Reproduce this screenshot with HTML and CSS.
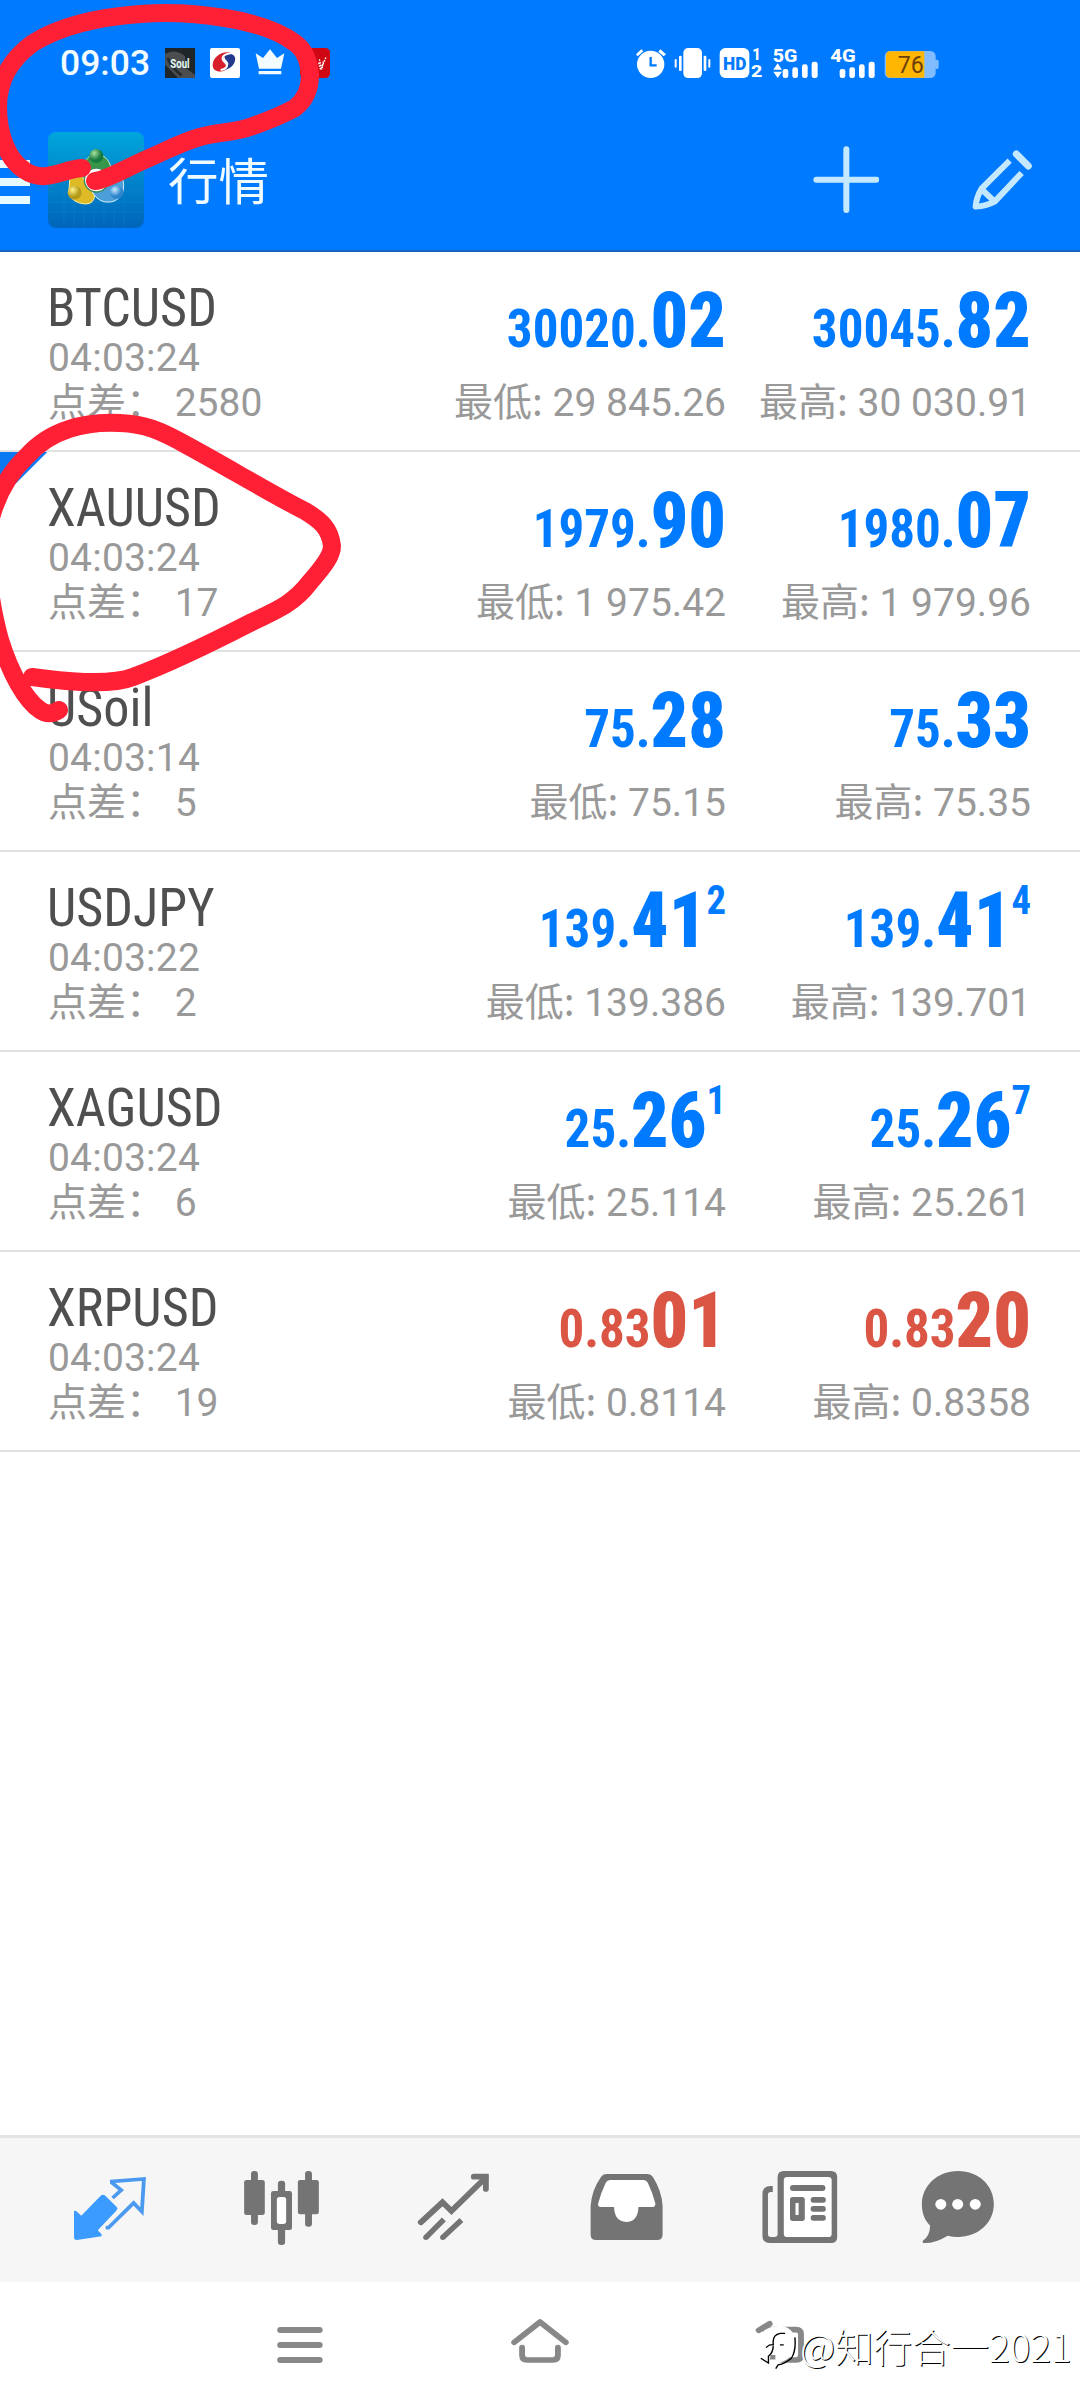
FILE: index.html
```html
<!DOCTYPE html>
<html lang="zh-CN">
<head>
<meta charset="utf-8">
<title>行情</title>
<link rel="stylesheet" href="styles.css">
</head>
<body>
<div class="screen">
  <header class="header">
    <div class="statusbar">
      <span class="clock">09:03</span>
      <div class="notifications">
        <svg class="notif" viewBox="0 0 90 90"><rect width="90" height="90" fill="#1f2629"/><path d="M0 18Q30 0 60 24L62 60 90 80V90H40Q10 60 0 50Z" fill="#4b4d4e"/><path d="M8 30Q20 60 50 82" stroke="#252a2c" stroke-width="8" fill="none"/><text x="16" y="59" font-size="38" font-weight="700" textLength="58" lengthAdjust="spacingAndGlyphs" fill="#e4fbf8">Soul</text></svg>
        <svg class="notif" viewBox="0 0 90 90"><rect width="90" height="90" rx="6" fill="#fff"/><path d="M62 14C34 8 8 28 8 52C8 70 30 76 46 66C56 58 52 48 42 42C34 36 40 24 62 14Z" fill="#d8202c"/><path d="M48 17C70 14 80 26 74 42C68 58 52 66 40 66C54 58 60 48 50 38C42 30 42 22 48 17Z" fill="#24388c"/><path d="M62 16C32 20 34 34 46 44C56 54 50 62 32 66" stroke="#fff" stroke-width="6" fill="none"/></svg>
        <svg class="notif" viewBox="0 0 90 90"><path d="M2 16L24 30 45 4 66 30 88 16 78 62H12ZM11 69H79V79H11Z" fill="#f2fcff"/></svg>
        <svg class="notif" viewBox="0 0 90 90"><rect width="90" height="90" rx="14" fill="#cf0712"/><path d="M58 34L64 60 78 28M56 44L62 66M70 40L66 64" stroke="#fff" stroke-width="4" stroke-dasharray="5 3" fill="none"/></svg>
      </div>
      <svg class="indicators" viewBox="100 75 930 110">
        <g fill="#fff">
          <circle cx="153" cy="133" r="41"/><path d="M109 103L125 88 131 94 114 109ZM182 88L199 103 192 109 176 95Z"/>
          <path d="M153 111V136H171" stroke="#007aff" stroke-width="7" fill="none"/>
          <rect x="251" y="84" width="56" height="90" rx="14"/><rect x="238" y="107" width="8" height="46" rx="3"/><rect x="225" y="117" width="6" height="26" rx="3"/><rect x="312" y="107" width="8" height="46" rx="3"/><rect x="326" y="117" width="6" height="26" rx="3"/>
          <rect x="360" y="84" width="89" height="90" rx="17"/>
          <text x="370" y="149" font-size="57" font-weight="900" textLength="70" lengthAdjust="spacingAndGlyphs" fill="#007aff">HD</text>
          <text x="458" y="121" font-size="49" font-weight="800" textLength="26" lengthAdjust="spacingAndGlyphs">1</text>
          <text x="454" y="172" font-size="49" font-weight="800" textLength="34" lengthAdjust="spacingAndGlyphs">2</text>
          <text x="519" y="125" font-size="57" font-weight="800" textLength="74" lengthAdjust="spacingAndGlyphs">5G</text>
          <text x="692" y="125" font-size="57" font-weight="800" textLength="76" lengthAdjust="spacingAndGlyphs">4G</text>
          <path d="M534 130L547 149H521ZM521 155H547L534 174Z"/>
          <rect x="549" y="147" width="17" height="27" rx="7"/><rect x="578" y="142" width="17" height="32" rx="7"/><rect x="607" y="133" width="17" height="41" rx="7"/><rect x="636" y="125" width="18" height="49" rx="7"/>
          <rect x="720" y="147" width="17" height="27" rx="7"/><rect x="749" y="142" width="17" height="32" rx="7"/><rect x="778" y="133" width="17" height="41" rx="7"/><rect x="807" y="125" width="18" height="49" rx="7"/>
        </g>
        <rect x="855" y="93" width="153" height="81" rx="16" fill="#80bcff"/><rect x="1006" y="119" width="11" height="28" rx="5" fill="#80bcff"/>
        <path d="M872 94H974V173H872Q859 173 859 160V107Q859 94 872 94Z" fill="#ffb600"/>
        <text x="894" y="158" font-size="69" textLength="78" lengthAdjust="spacingAndGlyphs" fill="#6b3f08">76</text>
      </svg>
    </div>
    <div class="toolbar">
      <div class="drawer"><i></i><i></i><i></i></div>
      <svg class="app-icon" viewBox="0 0 288 288">
        <defs>
          <linearGradient id="tile" x2="0" y2="1"><stop stop-color="#00a6dd"/><stop offset=".5" stop-color="#0084c9"/><stop offset="1" stop-color="#0065bb"/></linearGradient>
          <radialGradient id="gold" cx=".35" cy=".3"><stop stop-color="#fff08a"/><stop offset="1" stop-color="#b39a18"/></radialGradient>
          <radialGradient id="sky" cx=".35" cy=".3"><stop stop-color="#c9eaff"/><stop offset="1" stop-color="#2d86cc"/></radialGradient>
          <radialGradient id="leaf" cx=".35" cy=".3"><stop stop-color="#a8e29a"/><stop offset="1" stop-color="#16793f"/></radialGradient>
        </defs>
        <rect width="288" height="288" rx="24" fill="url(#tile)"/>
        <path d="M48 0V288M78 0V288M108 0V288M138 0V288M168 0V288M198 0V288M228 0V288M0 210H288M0 240H288M0 180H288" stroke="#26a0dc" stroke-width="2" opacity=".25"/>
        <path d="M106 118C108 76 130 66 146 68C174 68 188 90 191 120L178 138Q146 110 116 134Z" fill="#36974b" stroke="#d2ebc0" stroke-width="3"/>
        <path d="M66 134Q66 110 90 104Q106 150 140 190Q138 216 112 216Q76 214 62 186Z" fill="#dfba27" stroke="#fff3a2" stroke-width="3"/>
        <path d="M128 170Q160 184 188 150L222 136Q232 160 222 186Q206 214 172 210Q144 206 128 170Z" fill="#4b9ed8" stroke="#d6efff" stroke-width="3"/>
        <circle cx="145" cy="144" r="36" fill="#fff" stroke="#3b8a5a" stroke-width="4"/>
        <circle cx="145" cy="72" r="21" fill="url(#leaf)"/><circle cx="80" cy="182" r="21" fill="url(#gold)"/><circle cx="206" cy="181" r="20" fill="url(#sky)"/>
      </svg>
      <h1 class="title">行情</h1>
      <svg class="tool-icon add" viewBox="638 379 200 202"><path d="M738 389V571M648 480H828" stroke="#c4e9ff" stroke-width="18" stroke-linecap="round"/></svg>
      <svg class="tool-icon edit" viewBox="1117 388 181 181"><g fill="none" stroke="#c4e9ff" stroke-width="18" stroke-linejoin="round"><path d="M1230 420L1145 505Q1130 530 1128 558Q1160 556 1185 543L1266 457"/><path d="M1145 505L1185 543"/><path d="M1250 400L1286 436" stroke-width="21" stroke-linecap="round"/></g></svg>
    </div>
  </header>

  <main class="quotes">
    <section class="row">
      <div class="info"><h2>BTCUSD</h2><p class="time">04:03:24</p><p class="meta">点差： 2580</p></div>
      <div class="quote"><p class="price">30020.<b>02</b></p><p class="meta"><span>最低:</span> 29 845.26</p></div>
      <div class="quote"><p class="price">30045.<b>82</b></p><p class="meta"><span>最高:</span> 30 030.91</p></div>
    </section>
    <section class="row flagged">
      <div class="info"><h2>XAUUSD</h2><p class="time">04:03:24</p><p class="meta">点差： 17</p></div>
      <div class="quote"><p class="price">1979.<b>90</b></p><p class="meta"><span>最低:</span> 1 975.42</p></div>
      <div class="quote"><p class="price">1980.<b>07</b></p><p class="meta"><span>最高:</span> 1 979.96</p></div>
    </section>
    <section class="row">
      <div class="info"><h2>USoil</h2><p class="time">04:03:14</p><p class="meta">点差： 5</p></div>
      <div class="quote"><p class="price">75.<b>28</b></p><p class="meta"><span>最低:</span> 75.15</p></div>
      <div class="quote"><p class="price">75.<b>33</b></p><p class="meta"><span>最高:</span> 75.35</p></div>
    </section>
    <section class="row">
      <div class="info"><h2>USDJPY</h2><p class="time">04:03:22</p><p class="meta">点差： 2</p></div>
      <div class="quote"><p class="price">139.<b>41</b><sup>2</sup></p><p class="meta"><span>最低:</span> 139.386</p></div>
      <div class="quote"><p class="price">139.<b>41</b><sup>4</sup></p><p class="meta"><span>最高:</span> 139.701</p></div>
    </section>
    <section class="row">
      <div class="info"><h2>XAGUSD</h2><p class="time">04:03:24</p><p class="meta">点差： 6</p></div>
      <div class="quote"><p class="price">25.<b>26</b><sup>1</sup></p><p class="meta"><span>最低:</span> 25.114</p></div>
      <div class="quote"><p class="price">25.<b>26</b><sup>7</sup></p><p class="meta"><span>最高:</span> 25.261</p></div>
    </section>
    <section class="row down">
      <div class="info"><h2>XRPUSD</h2><p class="time">04:03:24</p><p class="meta">点差： 19</p></div>
      <div class="quote"><p class="price">0.83<b>01</b></p><p class="meta"><span>最低:</span> 0.8114</p></div>
      <div class="quote"><p class="price">0.83<b>20</b></p><p class="meta"><span>最高:</span> 0.8358</p></div>
    </section>
  </main>

  <nav class="tabs">
    <svg viewBox="61 54 502.4 432" preserveAspectRatio="none"><path d="M294 226Q300 222 306 227L339 261Q343 266 339 271L284 331 295 343V349L223 360Q215 360 215 352V272L221 273 236 287Z" fill="#3b9bff"/><path d="M327 234L352 210 325 188V184L418 177 412 275 388 249 315 323H307" fill="none" stroke="#4c9af0" stroke-width="11"/></svg>
    <svg viewBox="563.4 54 502.4 432" preserveAspectRatio="none"><g fill="#747474"><rect x="709" y="180" width="60" height="105" rx="7"/><rect x="729" y="153" width="20" height="162" rx="9"/><rect x="865" y="180" width="61" height="103" rx="7"/><rect x="886" y="153" width="20" height="167" rx="9"/><rect x="807" y="182" width="21" height="193" rx="9"/><rect x="787" y="213" width="61" height="117" rx="7"/></g><rect x="804" y="231" width="27" height="81" rx="8" fill="#fff"/></svg>
    <svg viewBox="1065.8 54 502.4 432" preserveAspectRatio="none"><g fill="none" stroke="#747474" stroke-width="17" stroke-linecap="round"><path d="M1222 307L1285 247 1311 273 1410 173"/><path d="M1376 170H1411V207"/></g><path d="M1237 352L1289 298M1286 352L1340 300" stroke="#747474" stroke-width="16"/><circle cx="1237" cy="352" r="8" fill="#747474"/><circle cx="1286" cy="352" r="8" fill="#747474"/></svg>
    <svg viewBox="0 54 502.4 432" preserveAspectRatio="none"><path d="M192 162H313Q322 162 328 171Q354 214 356 258V344Q356 360 340 360H163Q147 360 147 344V258Q150 211 177 171Q183 162 192 162Z" fill="#747474"/><path d="M203 180H301Q309 180 313 188Q326 215 335 250Q336 261 327 261H286Q284 306 250 306Q216 304 215 261H176Q167 261 169 250Q176 220 191 188Q195 180 203 180Z" fill="#fff"/></svg>
    <svg viewBox="502.4 54 502.4 432" preserveAspectRatio="none"><path d="M676 198H670Q646 198 646 222V348Q646 369 667 369H845Q863 369 863 351V171Q863 153 845 153H708Q690 153 690 171V342Q690 351 681 351H670Q662 351 662 342V225Q662 216 670 216H676Z" fill="#747474"/><rect x="708" y="171" width="139" height="180" rx="10" fill="#fff"/><g fill="#747474"><rect x="726" y="195" width="103" height="18" rx="9"/><rect x="726" y="231" width="43" height="72" rx="8"/><rect x="786" y="231" width="44" height="17" rx="8"/><rect x="786" y="258" width="44" height="17" rx="8"/><rect x="786" y="285" width="44" height="17" rx="8"/></g><rect x="742" y="249" width="9" height="36" fill="#fff"/></svg>
    <svg viewBox="1004.8 54 502.4 432" preserveAspectRatio="none"><path d="M1214 153C1275 153 1318 198 1318 252C1318 310 1270 351 1214 351Q1197 351 1184 347Q1150 369 1117 369Q1109 369 1112 362Q1132 348 1133 317C1115 298 1109 277 1109 252C1109 197 1155 153 1214 153Z" fill="#747474"/><g fill="#fff"><circle cx="1164" cy="253" r="16"/><circle cx="1213" cy="253" r="16"/><circle cx="1264" cy="253" r="16"/></g></svg>
  </nav>

  <nav class="system">
    <svg viewBox="522.7 486 697 378" preserveAspectRatio="none"><path d="M814 630H928M814 675H928M814 720H928" stroke="#888" stroke-width="18" stroke-linecap="round"/></svg>
    <svg viewBox="-348.5 486 697 378" preserveAspectRatio="none"><path d="M-75 667L0 606 75 667M-52 683V706Q-52 720 -38 720H38Q52 720 52 706V683" fill="none" stroke="#888" stroke-width="17" stroke-linecap="round" stroke-linejoin="round"/></svg>
    <svg viewBox="348.5 486 697 378" preserveAspectRatio="none"><path d="M635 631L667 611M654 629H744Q758 629 758 643V706Q758 720 744 720H676" fill="none" stroke="#888" stroke-width="17" stroke-linecap="round"/></svg>
    <div class="watermark">
      <svg viewBox="634 620 115 140" preserveAspectRatio="none"><path d="M640 655Q655 625 700 626Q744 630 742 690Q734 724 690 738L684 754Q684 740 672 738L662 738Q644 730 642 700Z" fill="#fff"/><path d="M657 690L668 682H678Q674 652 698 648H712M697 682H708M678 686Q676 708 664 716V736L642 722M740 660Q744 700 730 722Q712 738 692 742L685 753" fill="none" stroke="#000" stroke-width="4"/><path d="M670 712H684V726H668Z" fill="#888"/></svg>
      <span>@知行合一2021</span>
    </div>
  </nav>

  <svg class="marker" viewBox="0 0 1080 760">
    <path d="M95 181C106 180 126 168 147 159C170 149 182 142 200 137C218 132 230 133 247 128C265 122 280 116 295 108C305 100 310 88 310 75C309 62 305 50 295 43C278 30 250 22 225 18C195 13 165 12 140 14C100 17 60 26 33 43C12 58 -2 80 -2 107C-2 135 8 160 24 170C44 184 60 170 82 168"/>
    <path d="M32 677C60 681 110 686 133 677C170 663 215 641 250 623C280 609 295 602 310 582C325 565 332 555 332 546C330 528 320 520 305 511C277 497 225 466 190 447C160 430 145 424 120 423C85 421 50 430 27 456C10 472 -5 495 -12 530C-14 580 -8 610 0 640C10 672 25 700 40 710C48 716 54 713 59 710"/>
  </svg>
</div>
</body>
</html>
```
FILE: styles.css
```css
* { box-sizing: border-box; margin: 0; padding: 0; }
body { background: #fff; }
.screen {
  position: relative;
  display: flex;
  flex-direction: column;
  width: 1080px;
  height: 2408px;
  overflow: hidden;
  background: #fff;
  font-family: Roboto, "Noto Sans CJK SC", sans-serif;
}
.header {
  height: 252px;
  background: #007aff;
  border-bottom: 2px solid #1565c0;
}
.statusbar {
  display: flex;
  align-items: flex-start;
  height: 132px;
  padding: 45px 136.7px 0 60px;
}
.clock {
  width: 105px;
  font-size: 35.5px;
  font-weight: 500;
  line-height: 37px;
  color: #f2fcff;
}
.notifications { display: flex; gap: 15px; padding-top: 3px; }
.notif { width: 30px; height: 30px; }
.indicators { width: 310px; height: 36.7px; margin-left: auto; }
.toolbar { display: flex; align-items: center; height: 96px; padding-right: 47.5px; }
.drawer { display: flex; flex-direction: column; gap: 10px; width: 48px; padding-top: 4px; }
.drawer i { width: 30px; height: 8px; background: #e6f9ff; }
.app-icon { width: 96px; height: 96px; }
.title {
  margin-left: 24px;
  padding-top: 5px;
  font-size: 50.5px;
  font-weight: 400;
  line-height: 60px;
  color: #f0fbff;
}
.tool-icon.add { width: 66.7px; height: 67.3px; margin-left: auto; }
.tool-icon.edit { width: 60.3px; height: 60.3px; margin-left: 93px; }

.quotes { height: 1883px; }
.row {
  display: grid;
  grid-template-columns: 378px 300px 305px;
  height: 200px;
  padding-left: 48px;
  border-bottom: 2px solid #e1e1e1;
}
.flagged { background: linear-gradient(135deg, #0a79f2 33px, transparent 34px); }
.info { padding-top: 26px; white-space: nowrap; }
.info h2 {
  margin-left: -1px;
  font-family: "Roboto Condensed", Roboto, sans-serif;
  font-stretch: 75%;
  font-size: 54px;
  font-weight: 400;
  line-height: 60px;
  color: #4f4f4f;
  transform: scaleX(.966);
  transform-origin: left;
}
.time { font-size: 39px; line-height: 41px; letter-spacing: .2px; color: #999; }
.meta { font-size: 39px; line-height: 48px; color: #999; }
.meta span { font-family: "Noto Sans CJK SC", sans-serif; line-height: 0; }
.quote { padding-top: 29px; text-align: right; white-space: nowrap; }
.price {
  height: 80px;
  margin-bottom: 18px;
  font-family: "Roboto Condensed", Roboto, sans-serif;
  font-stretch: 75%;
  font-size: 54px;
  font-weight: 700;
  line-height: 0;
  color: #007aff;
  transform: scaleX(.945);
  transform-origin: right;
}
.price b { font-size: 78px; line-height: 80px; }
.price sup { font-size: 41px; line-height: 0; vertical-align: 33px; }
.down .price { color: #db5545; }

.tabs {
  display: flex;
  height: 147px;
  padding-left: 21px;
  background: #f6f6f6;
  border-top: 3px solid #e4e4e4;
}
.tabs svg { width: 173px; height: 144px; flex: none; }
.system { position: relative; display: flex; height: 126px; padding-left: 180px; }
.system > svg { width: 240px; height: 126px; }
.watermark {
  position: absolute;
  left: 758px;
  top: 37px;
  display: flex;
  align-items: center;
  font-family: "Noto Sans CJK SC", sans-serif;
  font-size: 38.5px;
  font-weight: 300;
  line-height: 50px;
  color: #fff;
  text-shadow: 1px 1px 0 #000;
  white-space: nowrap;
}
.watermark svg { width: 40px; height: 47px; margin-top: 5px; margin-right: 2px; }
.marker {
  position: absolute;
  left: 0;
  top: 0;
  width: 1080px;
  height: 760px;
  fill: none;
  stroke: #ff2035;
  stroke-width: 18px;
  stroke-linecap: round;
  pointer-events: none;
}
```
